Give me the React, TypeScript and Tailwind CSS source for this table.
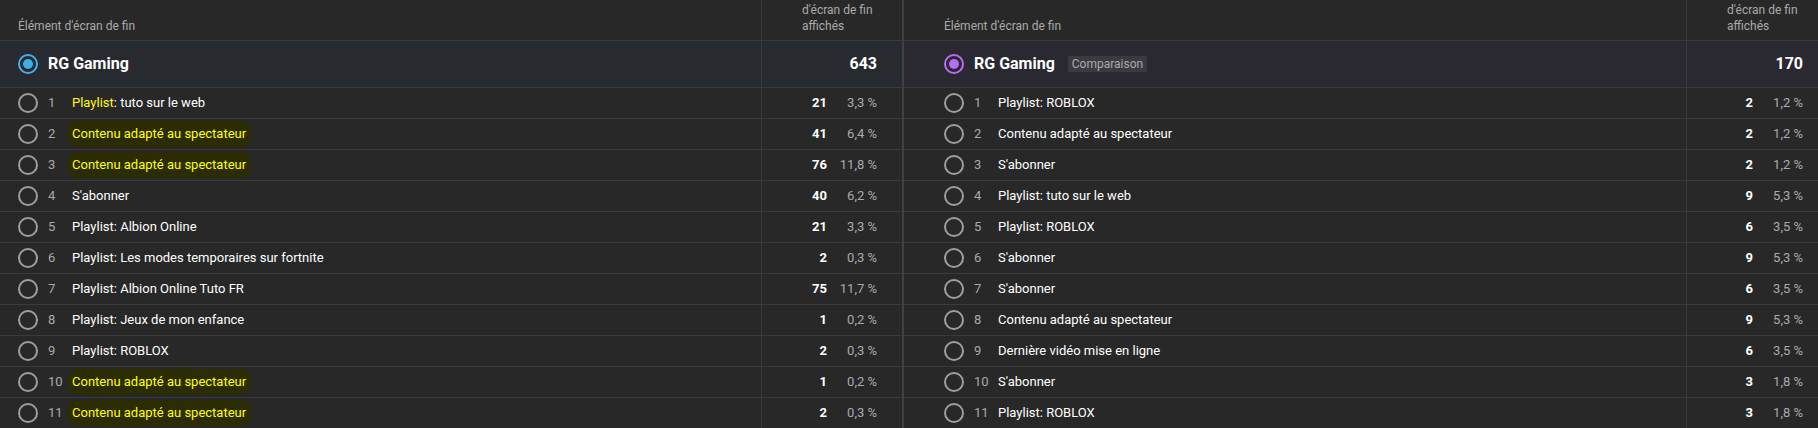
import React from "react";

type Row = { n: number; text: string; v: string; p: string; hl?: "playlist" | "full" };

const left: Row[] = [
  { n: 1, text: "Playlist: tuto sur le web", v: "21", p: "3,3 %", hl: "playlist" },
  { n: 2, text: "Contenu adapté au spectateur", v: "41", p: "6,4 %", hl: "full" },
  { n: 3, text: "Contenu adapté au spectateur", v: "76", p: "11,8 %", hl: "full" },
  { n: 4, text: "S'abonner", v: "40", p: "6,2 %" },
  { n: 5, text: "Playlist: Albion Online", v: "21", p: "3,3 %" },
  { n: 6, text: "Playlist: Les modes temporaires sur fortnite", v: "2", p: "0,3 %" },
  { n: 7, text: "Playlist: Albion Online Tuto FR", v: "75", p: "11,7 %" },
  { n: 8, text: "Playlist: Jeux de mon enfance", v: "1", p: "0,2 %" },
  { n: 9, text: "Playlist: ROBLOX", v: "2", p: "0,3 %" },
  { n: 10, text: "Contenu adapté au spectateur", v: "1", p: "0,2 %", hl: "full" },
  { n: 11, text: "Contenu adapté au spectateur", v: "2", p: "0,3 %", hl: "full" },
];

const right: Row[] = [
  { n: 1, text: "Playlist: ROBLOX", v: "2", p: "1,2 %" },
  { n: 2, text: "Contenu adapté au spectateur", v: "2", p: "1,2 %" },
  { n: 3, text: "S'abonner", v: "2", p: "1,2 %" },
  { n: 4, text: "Playlist: tuto sur le web", v: "9", p: "5,3 %" },
  { n: 5, text: "Playlist: ROBLOX", v: "6", p: "3,5 %" },
  { n: 6, text: "S'abonner", v: "9", p: "5,3 %" },
  { n: 7, text: "S'abonner", v: "6", p: "3,5 %" },
  { n: 8, text: "Contenu adapté au spectateur", v: "9", p: "5,3 %" },
  { n: 9, text: "Dernière vidéo mise en ligne", v: "6", p: "3,5 %" },
  { n: 10, text: "S'abonner", v: "3", p: "1,8 %" },
  { n: 11, text: "Playlist: ROBLOX", v: "3", p: "1,8 %" },
];

function Radio({ color, checked }: { color: string; checked?: boolean }) {
  return (
    <svg width="20" height="20" viewBox="0 0 20 20" className="shrink-0">
      <circle cx="10" cy="10" r="9" fill="none" stroke={color} strokeWidth="2" />
      {checked && <circle cx="10" cy="10" r="5" fill={color} />}
    </svg>
  );
}

function RowText({ r }: { r: Row }) {
  if (r.hl === "playlist") {
    const rest = r.text.slice("Playlist".length);
    return (
      <span className="text-white">
        <span className="text-[#ffff00]">Playlist</span>
        {rest}
      </span>
    );
  }
  if (r.hl === "full") {
    return (
      <span className="text-[#ffff00] bg-[#2c2c03] rounded-[10px] px-[5px] -ml-[5px] py-[3px]">
        {r.text}
      </span>
    );
  }
  return <span className="text-white">{r.text}</span>;
}

function Table({
  textW,
  valW,
  padL,
  padR,
  channelBg,
  radioColor,
  total,
  badge,
  rows,
  grow,
}: {
  textW: string;
  valW: string;
  padL: string;
  padR: string;
  channelBg: string;
  radioColor: string;
  total: string;
  badge?: boolean;
  rows: Row[];
  grow?: boolean;
}) {
  return (
    <div className={`flex flex-col ${grow ? "flex-1" : "shrink-0"}`}>
      {/* header */}
      <div className="flex h-[41px] shrink-0 border-b border-[#3a3a3a]">
        <div className={`${textW} ${padL} border-r border-[#3a3a3a] flex items-end pb-[6px] text-[12px] leading-[16px] text-[#aaaaaa]`}>
          Élément d'écran de fin
        </div>
        <div className={`${valW} pl-[40px] flex flex-col justify-end pb-[6px] text-[12px] leading-[16px] text-[#aaaaaa]`}>
          <div>d'écran de fin</div>
          <div>affichés</div>
        </div>
      </div>
      {/* channel row */}
      <div className={`flex h-[47px] shrink-0 border-b border-[#3a3a3a] ${channelBg}`}>
        <div className={`${textW} ${padL} border-r border-[#3a3a3a] flex items-center`}>
          <Radio color={radioColor} checked />
          <span className="ml-[10px] text-[16px] font-bold text-white">RG Gaming</span>
          {badge && (
            <span className="ml-[13px] bg-[#3b3a40] rounded-[2px] px-[4px] h-[16px] flex items-center text-[12px] text-[#aaaaaa]">
              Comparaison
            </span>
          )}
        </div>
        <div className={`${valW} ${padR} flex items-center justify-end text-[16px] font-bold text-white`}>
          {total}
        </div>
      </div>
      {rows.map((r) => (
        <div key={r.n} className="flex h-[31px] border-b border-[#3a3a3a] shrink-0">
          <div className={`${textW} ${padL} border-r border-[#3a3a3a] flex items-center text-[13px]`}>
            <Radio color="#9e9e9e" />
            <span className="ml-[10px] w-[24px] text-[#aaaaaa]">{r.n}</span>
            <RowText r={r} />
          </div>
          <div className={`${valW} ${padR} flex items-center justify-end text-[13px]`}>
            <span className="font-bold text-white">{r.v}</span>
            <span className="w-[50px] text-right text-[#aaaaaa]">{r.p}</span>
          </div>
        </div>
      ))}
    </div>
  );
}

export default function App() {
  return (
    <div className="w-[1818px] h-[428px] overflow-hidden bg-[#282828] font-['Roboto','Liberation_Sans',sans-serif] flex items-start">
      <Table
        textW="w-[762px]"
        valW="w-[140px]"
        padL="pl-[18px]"
        padR="pr-[25px]"
        channelBg="bg-[#272b2f]"
        radioColor="#3fb0e6"
        total="643"
        rows={left}
      />
      <div className="w-[2px] h-[428px] bg-[#404040] shrink-0" />
      <Table
        textW="w-[783px]"
        valW="w-[131px]"
        padL="pl-[40px]"
        padR="pr-[15px]"
        channelBg="bg-[#2a2830]"
        radioColor="#b96cf0"
        total="170"
        badge
        rows={right}
        grow
      />
    </div>
  );
}
